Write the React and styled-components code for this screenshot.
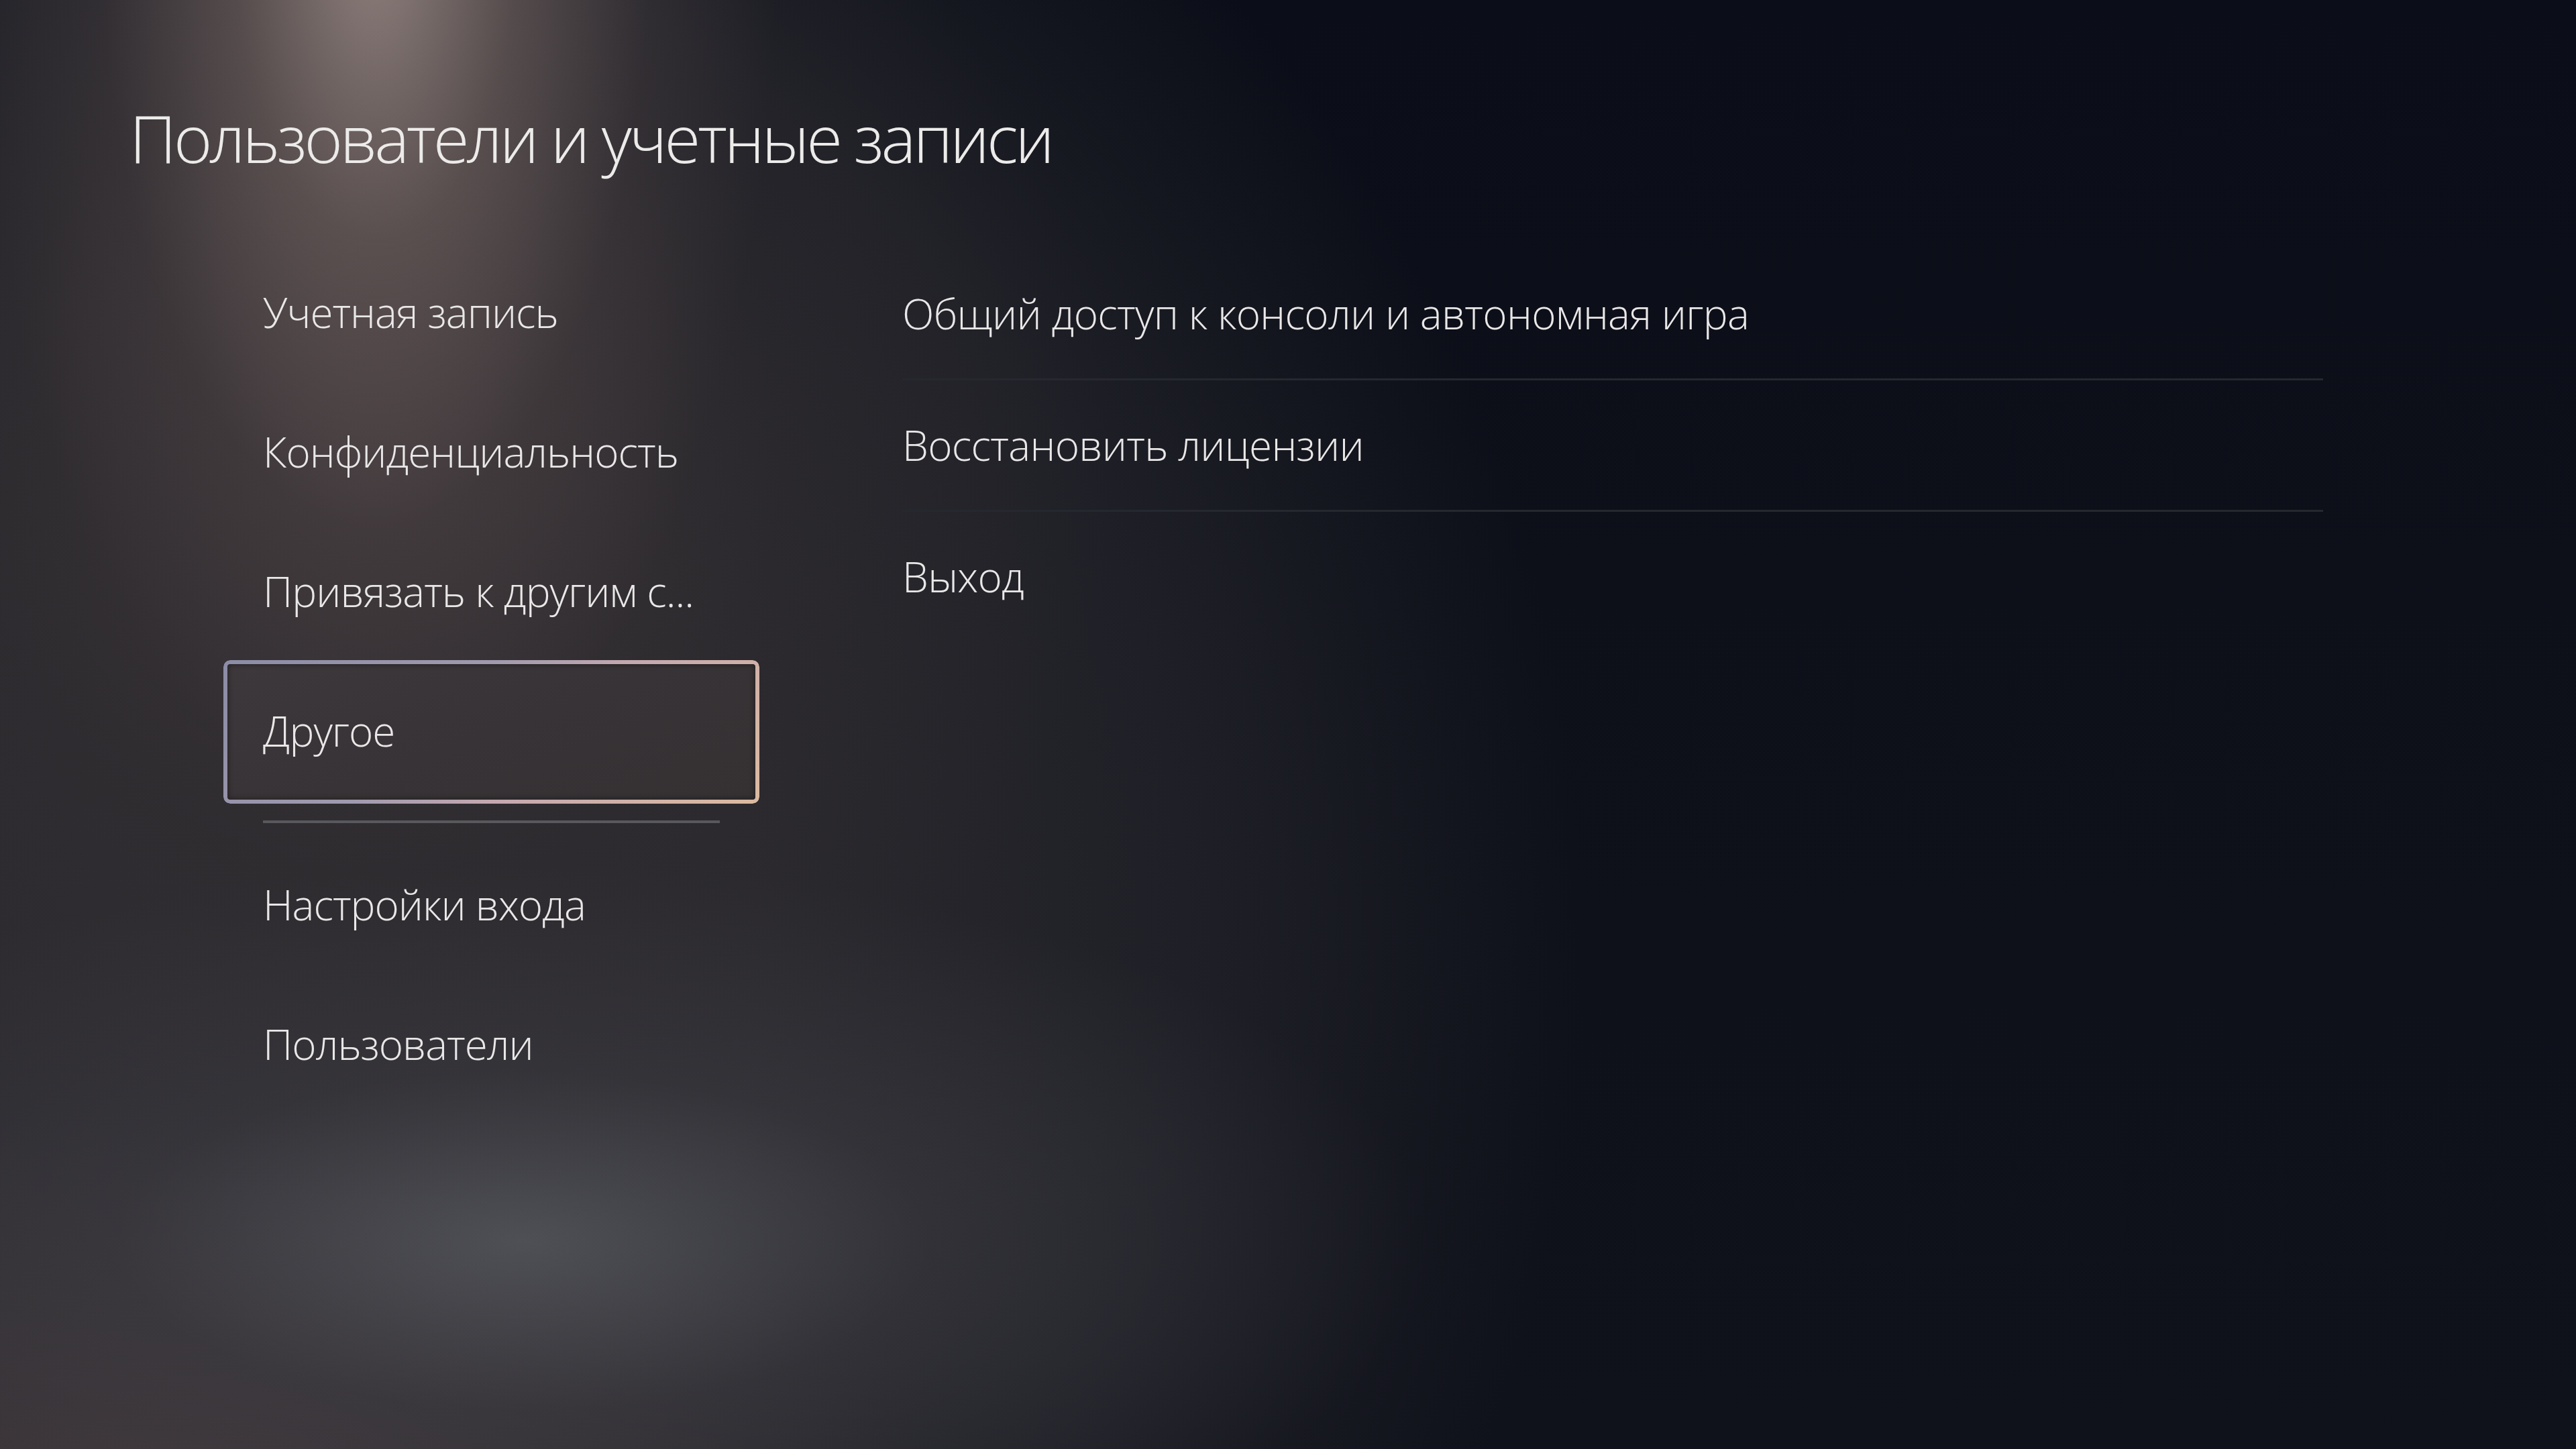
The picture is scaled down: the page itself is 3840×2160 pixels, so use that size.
import React from "react";
import styled, { createGlobalStyle } from "styled-components";

const GlobalStyle = createGlobalStyle`
  html, body {
    margin: 0;
    padding: 0;
    background: #0d1019;
  }
  * {
    box-sizing: border-box;
  }
`;

const leftItems = [
  "Учетная запись",
  "Конфиденциальность",
  "Привязать к другим с...",
  "Другое",
  "Настройки входа",
  "Пользователи",
];

const rightItems = [
  "Общий доступ к консоли и автономная игра",
  "Восстановить лицензии",
  "Выход",
];

export default function App() {
  return (
    <>
      <GlobalStyle />
      <Screen>
        <Title>Пользователи и учетные записи</Title>
        <Content>
          <Nav>
            {leftItems.map((item, i) => (
              <React.Fragment key={item}>
                <NavItem selected={i === 3}>
                  <span>{item}</span>
                </NavItem>
                {i === 3 && <NavDivider />}
              </React.Fragment>
            ))}
          </Nav>
          <List>
            {rightItems.map((item, i) => (
              <ListRow key={item} last={i === rightItems.length - 1}>
                {item}
              </ListRow>
            ))}
          </List>
        </Content>
      </Screen>
    </>
  );
}

const Screen = styled.div`
  width: 3840px;
  height: 2160px;
  overflow: hidden;
  font-family: "Open Sans", "Noto Sans", sans-serif;
  color: #e9e7e7;
  background:
    radial-gradient(ellipse 600px 1300px at 560px -100px, rgba(170, 152, 146, 0.8) 0%, rgba(132, 114, 110, 0.5) 35%, rgba(96, 82, 82, 0.22) 68%, rgba(60, 52, 54, 0) 100%),
    radial-gradient(ellipse 1100px 1100px at 560px 700px, rgba(72, 62, 64, 0.55) 0%, rgba(56, 50, 52, 0.25) 55%, rgba(40, 38, 42, 0) 100%),
    radial-gradient(ellipse 1350px 560px at 780px 1850px, rgba(84, 86, 92, 0.85) 0%, rgba(62, 62, 68, 0.5) 45%, rgba(40, 40, 45, 0) 100%),
    radial-gradient(ellipse 1100px 600px at 250px 2250px, rgba(78, 64, 66, 0.65) 0%, rgba(50, 45, 48, 0) 100%),
    radial-gradient(ellipse 2700px 2700px at 200px 1400px, #2d2b30 0%, #29282d 35%, #1f2027 58%, rgba(14, 17, 26, 0) 80%),
    linear-gradient(to bottom, #0b0e18 0%, #10121b 100%);
`;

const Title = styled.h1`
  margin: 0;
  padding: 135px 0 0 193px;
  font-size: 98px;
  font-weight: 300;
  line-height: 140px;
  letter-spacing: -4.1px;
  color: #ecebea;
`;

const Content = styled.div`
  display: flex;
  align-items: flex-start;
  margin-top: 86px;
`;

const Nav = styled.div`
  display: flex;
  flex-direction: column;
  margin-left: 333px;
  width: 799px;
`;

const NavItem = styled.div`
  height: 208px;
  display: flex;
  align-items: center;
  padding-left: 59px;
  font-size: 62px;
  font-weight: 300;
  letter-spacing: -1px;
  position: relative;

  ${({ selected }) =>
    selected &&
    `
    &::before {
      content: "";
      position: absolute;
      inset: -1px 0 -5px 0;
      border-radius: 10px;
      padding: 6px;
      background: linear-gradient(135deg, #8b8ca6 0%, #a09aae 40%, #c4a8b0 60%, #dcbaa0 100%);
      -webkit-mask: linear-gradient(#000 0 0) content-box, linear-gradient(#000 0 0);
      -webkit-mask-composite: xor;
      mask-composite: exclude;
    }
    &::after {
      content: "";
      position: absolute;
      inset: 5px 6px 1px 6px;
      border-radius: 5px;
      background: linear-gradient(160deg, #3d383b 0%, #383336 50%, #353133 100%);
      box-shadow: inset 0 0 10px rgba(0, 0, 0, 0.45);
    }
  `}

  span {
    position: relative;
    z-index: 1;
  }
`;

const NavDivider = styled.div`
  margin: 30px 59px 17px 59px;
  height: 4px;
  background: #59585d;
`;

const List = styled.div`
  display: flex;
  flex-direction: column;
  margin-left: 213px;
  width: 2118px;
  padding-top: 10px;
`;

const ListRow = styled.div`
  height: 196px;
  display: flex;
  align-items: center;
  padding-bottom: ${({ last }) => (last ? "5px" : "2px")};
  font-size: 62px;
  font-weight: 300;
  letter-spacing: -0.7px;
  border-bottom: ${({ last }) => (last ? "none" : "3px solid #262830")};
`;
